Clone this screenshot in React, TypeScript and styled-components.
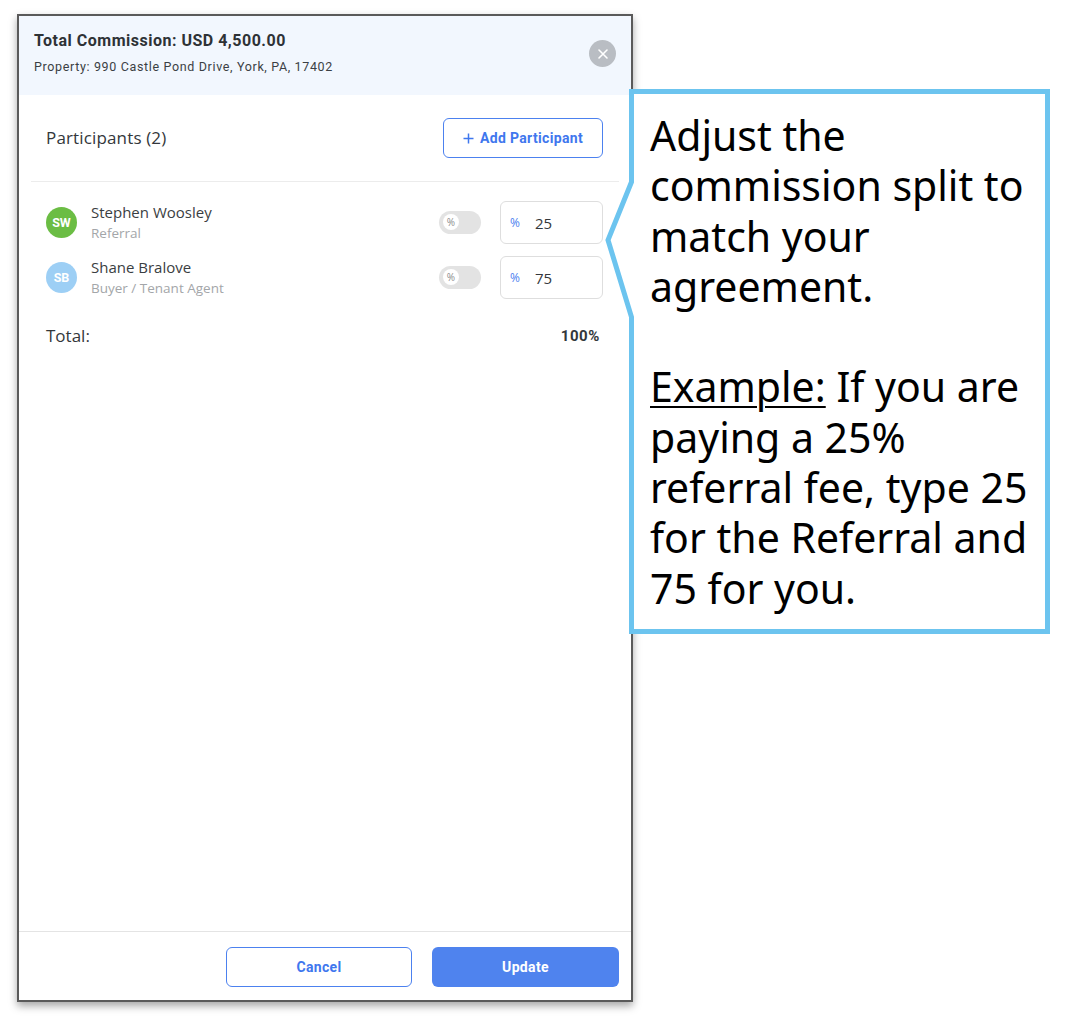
import React from "react";
import styled, { createGlobalStyle } from "styled-components";

const Global = createGlobalStyle`
  html, body { margin: 0; padding: 0; background: #ffffff; }
  body { font-family: "Open Sans", "Noto Sans", sans-serif; }
  * { box-sizing: border-box; }
`;

const Page = styled.div`
  position: relative;
  width: 1074px;
  height: 1020px;
  padding: 14px 0 0 17px;
`;

const Modal = styled.div`
  width: 616px;
  height: 988px;
  border: 2px solid #5a5a5a;
  background: #ffffff;
  display: flex;
  flex-direction: column;
  box-shadow: 0 4px 8px rgba(0, 0, 0, 0.35);
`;

const Header = styled.div`
  height: 79px;
  background: #f2f7fe;
  display: flex;
  align-items: center;
  justify-content: space-between;
  padding: 0 15px 4px 15px;
`;

const HeaderText = styled.div`
  display: flex;
  flex-direction: column;
  gap: 9px;
  margin-top: -3px;
  font-family: "Roboto", "Liberation Sans", sans-serif;
`;

const Title = styled.div`
  font-size: 16px;
  font-weight: 700;
  color: #2e3236;
  letter-spacing: 0.5px;
`;

const Sub = styled.div`
  font-size: 12.5px;
  color: #3b3f44;
  letter-spacing: 0.65px;
`;

const CloseBtn = styled.div`
  width: 27px;
  height: 27px;
  border-radius: 50%;
  background: #b9bdc3;
  display: flex;
  align-items: center;
  justify-content: center;
`;

const Body = styled.div`
  flex: 1;
  padding: 0 12px;
  display: flex;
  flex-direction: column;
`;

const TopRow = styled.div`
  display: flex;
  align-items: center;
  justify-content: space-between;
  padding: 23px 16px 23px 15px;
  border-bottom: 1px solid #ececec;
`;

const SectionTitle = styled.div`
  font-size: 17px;
  color: #33373b;
  letter-spacing: 0.15px;
  margin-top: -2px;
`;

const OutlineButton = styled.button<{ $w: number }>`
  width: ${(p) => p.$w}px;
  height: 40px;
  border: 1.5px solid #4c81ef;
  border-radius: 6px;
  background: #ffffff;
  color: #3f77ee;
  font-family: "Roboto", "Liberation Sans", sans-serif;
  font-weight: 700;
  font-size: 14px;
  letter-spacing: 0.35px;
  display: flex;
  align-items: center;
  justify-content: center;
  gap: 6px;
  padding: 0;
`;

const SolidButton = styled.button`
  width: 187px;
  height: 40px;
  border: none;
  border-radius: 6px;
  background: #4f83ee;
  color: #ffffff;
  font-family: "Roboto", "Liberation Sans", sans-serif;
  font-weight: 700;
  font-size: 14px;
  letter-spacing: 0.35px;
  padding: 0;
`;

const Rows = styled.div`
  display: flex;
  flex-direction: column;
  gap: 12px;
  padding: 19px 16px 0 15px;
`;

const Row = styled.div`
  display: flex;
  align-items: center;
  height: 43px;
`;

const Avatar = styled.div<{ $bg: string }>`
  width: 31px;
  height: 31px;
  border-radius: 50%;
  background: ${(p) => p.$bg};
  color: #ffffff;
  font-family: "Roboto", "Liberation Sans", sans-serif;
  font-weight: 700;
  font-size: 12.5px;
  display: flex;
  align-items: center;
  justify-content: center;
  margin-right: 14px;
  flex-shrink: 0;
`;

const Person = styled.div`
  flex: 1;
  display: flex;
  flex-direction: column;
  gap: 1px;
  margin-top: -1px;
`;

const Name = styled.div`
  font-size: 15px;
  color: #3a3e42;
  line-height: 20px;
`;

const Role = styled.div`
  font-size: 13.5px;
  color: #a3a6a9;
  line-height: 18px;
  margin-top: 1px;
`;

const Toggle = styled.div`
  width: 42px;
  height: 23px;
  border-radius: 12px;
  background: #e3e3e3;
  display: flex;
  align-items: center;
  padding-left: 4px;
  margin-right: 19px;
  margin-top: -1px;
`;

const Knob = styled.div`
  width: 16px;
  height: 16px;
  border-radius: 50%;
  background: #ffffff;
  color: #8c8c8c;
  font-size: 10px;
  display: flex;
  align-items: center;
  justify-content: center;
`;

const Field = styled.div`
  width: 103px;
  height: 43px;
  border: 1px solid #dedede;
  border-radius: 6px;
  display: flex;
  align-items: center;
  padding-left: 9px;
`;

const FieldUnit = styled.span`
  color: #4c81ef;
  font-size: 12px;
  width: 25px;
`;

const FieldValue = styled.span`
  color: #34383c;
  font-size: 15px;
`;

const TotalRow = styled.div`
  display: flex;
  justify-content: space-between;
  align-items: center;
  padding: 25px 19px 0 15px;
`;

const TotalLabel = styled.div`
  font-size: 17px;
  color: #33373b;
`;

const TotalValue = styled.div`
  font-family: "Roboto", "Liberation Sans", sans-serif;
  font-weight: 700;
  font-size: 15px;
  letter-spacing: 0.6px;
  color: #33373b;
`;

const Footer = styled.div`
  border-top: 1px solid #e4e4e4;
  display: flex;
  justify-content: flex-end;
  gap: 20px;
  padding: 15px 12px 13px 0;
`;

const Callout = styled.div`
  position: absolute;
  left: 605px;
  top: 89px;
  width: 447px;
  height: 546px;
`;

const CalloutShape = styled.svg`
  position: absolute;
  inset: 0;
`;

const CalloutText = styled.div`
  position: absolute;
  left: 45px;
  top: 21px;
  font-family: "Noto Sans", "Open Sans", sans-serif;
  font-size: 41px;
  line-height: 50.3px;
  color: #000000;
  white-space: nowrap;
`;

const Underline = styled.span`
  text-decoration: underline;
  text-decoration-thickness: 2px;
  text-underline-offset: 4px;
`;

const people = [
  { initials: "SW", name: "Stephen Woosley", role: "Referral", color: "#6bbd44", value: "25" },
  { initials: "SB", name: "Shane Bralove", role: "Buyer / Tenant Agent", color: "#9dcff5", value: "75" },
];

export default function App() {
  return (
    <Page>
      <Global />
      <Modal>
        <Header>
          <HeaderText>
            <Title>Total Commission: USD 4,500.00</Title>
            <Sub>Property: 990 Castle Pond Drive, York, PA, 17402</Sub>
          </HeaderText>
          <CloseBtn>
            <svg width="12" height="12" viewBox="0 0 12 12">
              <path d="M2 2 L10 10 M10 2 L2 10" stroke="#ffffff" strokeWidth="1.6" strokeLinecap="round" />
            </svg>
          </CloseBtn>
        </Header>
        <Body>
          <TopRow>
            <SectionTitle>Participants (2)</SectionTitle>
            <OutlineButton $w={160}>
              <svg width="11" height="11" viewBox="0 0 11 11">
                <path d="M5.5 0.5 V10.5 M0.5 5.5 H10.5" stroke="#3f77ee" strokeWidth="1.5" />
              </svg>
              Add Participant
            </OutlineButton>
          </TopRow>
          <Rows>
            {people.map((p) => (
              <Row key={p.initials}>
                <Avatar $bg={p.color}>{p.initials}</Avatar>
                <Person>
                  <Name>{p.name}</Name>
                  <Role>{p.role}</Role>
                </Person>
                <Toggle>
                  <Knob>%</Knob>
                </Toggle>
                <Field>
                  <FieldUnit>%</FieldUnit>
                  <FieldValue>{p.value}</FieldValue>
                </Field>
              </Row>
            ))}
          </Rows>
          <TotalRow>
            <TotalLabel>Total:</TotalLabel>
            <TotalValue>100%</TotalValue>
          </TotalRow>
        </Body>
        <Footer>
          <OutlineButton $w={186}>Cancel</OutlineButton>
          <SolidButton>Update</SolidButton>
        </Footer>
      </Modal>
      <Callout>
        <CalloutShape width="447" height="546" viewBox="0 0 447 546">
          <path
            d="M26.5 2.5 H442.5 V542.5 H26.5 V228 L3 151 L26.5 93 Z"
            fill="#ffffff"
            stroke="#6cc4ef"
            strokeWidth="5"
            strokeLinejoin="miter"
          />
        </CalloutShape>
        <CalloutText>
          Adjust the
          <br />
          commission split to
          <br />
          match your
          <br />
          agreement.
          <br />
          <br />
          <Underline>Example:</Underline> If you are
          <br />
          paying a 25%
          <br />
          referral fee, type 25
          <br />
          for the Referral and
          <br />
          75 for you.
        </CalloutText>
      </Callout>
    </Page>
  );
}
